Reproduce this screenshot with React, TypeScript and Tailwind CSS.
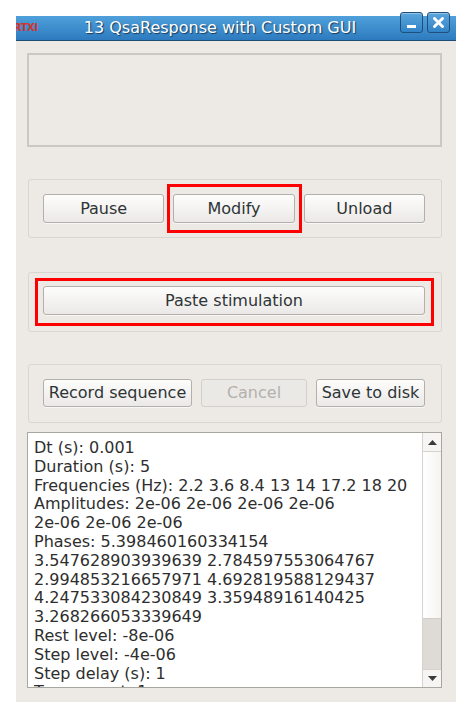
import React from "react";

const lines = [
  "Dt (s): 0.001",
  "Duration (s): 5",
  "Frequencies (Hz): 2.2 3.6 8.4 13 14 17.2 18 20",
  "Amplitudes: 2e-06 2e-06 2e-06 2e-06",
  "2e-06 2e-06 2e-06",
  "Phases: 5.398460160334154",
  "3.547628903939639 2.784597553064767",
  "2.994853216657971 4.692819588129437",
  "4.247533084230849 3.35948916140425",
  "3.268266053339649",
  "Rest level: -8e-06",
  "Step level: -4e-06",
  "Step delay (s): 1",
  "Trace count: 1",
];

function Btn({
  children,
  className = "",
  disabled = false,
}: {
  children: React.ReactNode;
  className?: string;
  disabled?: boolean;
}) {
  return (
    <button
      disabled={disabled}
      className={
        "flex items-center justify-center rounded-[3px] border text-[16px] leading-none " +
        (disabled
          ? "border-[#d3cfcb] bg-[#ebe9e6] text-[#b4b0ac] "
          : "border-[#b3afab] bg-linear-to-b from-[#fdfdfc] to-[#ebe9e7] text-[#2e3436] shadow-[0_1px_0_rgba(255,255,255,0.6)] ") +
        className
      }
    >
      {children}
    </button>
  );
}

function Arrow({ up }: { up: boolean }) {
  return (
    <svg width="9" height="5" viewBox="0 0 9 5">
      {up ? (
        <path d="M0 5 L4.5 0 L9 5 Z" fill="#3a3a3a" />
      ) : (
        <path d="M0 0 L4.5 5 L9 0 Z" fill="#3a3a3a" />
      )}
    </svg>
  );
}

export default function App() {
  return (
    <div className="min-h-[718px] bg-white pl-[16px] pt-[16px] font-['DejaVu_Sans',sans-serif]">
      <div className="flex h-[686px] w-[440px] flex-col bg-[#edeae6]">
        {/* Title bar */}
        <div className="flex h-[25px] items-center border-b border-[#1d4c75] bg-linear-to-b from-[#4fa0da] to-[#2d7bbf]">
          <div className="w-[24px] overflow-hidden">
            <span className="-ml-[2px] block text-[10px] font-bold leading-none tracking-[-0.5px] text-[#d2342c]">
              RTXI
            </span>
          </div>
          <div className="flex-1 text-center text-[16px] leading-none text-white [text-shadow:1px_1px_1px_#173a5c]">
            13 QsaResponse with Custom GUI
          </div>
          <div className="mr-[6px] -mt-[4px] flex gap-[4px] self-start">
            <div className="flex h-[21px] w-[23px] items-end justify-center rounded-[3px] border border-[#1f4f7a] bg-linear-to-b from-[#5aa6dc] to-[#3283c6] pb-[4px] shadow-[inset_0_1px_0_rgba(255,255,255,0.35)]">
              <div className="h-[3px] w-[9px] bg-white" />
            </div>
            <div className="flex h-[21px] w-[23px] items-center justify-center rounded-[3px] border border-[#1f4f7a] bg-linear-to-b from-[#5aa6dc] to-[#3283c6] shadow-[inset_0_1px_0_rgba(255,255,255,0.35)]">
              <svg width="11" height="11" viewBox="0 0 11 11">
                <path d="M1.5 1.5 L9.5 9.5 M9.5 1.5 L1.5 9.5" stroke="white" strokeWidth="2.8" strokeLinecap="square" />
              </svg>
            </div>
          </div>
        </div>

        {/* Content */}
        <div className="flex flex-1 flex-col pb-[14px] pl-[11px] pr-[14px] pt-[12px]">
          <div className="h-[94px] border-2 border-[#cbc7c3]" />

          {/* Group 1 */}
          <div className="ml-[1px] mt-[32px] h-[59px] rounded-[3px] border border-[#d9d5d1] pb-[14px] pl-[14px] pr-[16px] pt-[14px]">
            <div className="grid grid-cols-3 gap-[9px]">
              <Btn className="h-[29px]">Pause</Btn>
              <div className="relative">
                <Btn className="h-[29px] w-full">Modify</Btn>
                <div className="pointer-events-none absolute -bottom-[10px] -left-[6px] -right-[7px] -top-[10px] border-[3px] border-[#ff0000]" />
              </div>
              <Btn className="h-[29px]">Unload</Btn>
            </div>
          </div>

          {/* Group 2 */}
          <div className="relative ml-[1px] mt-[34px] h-[60px] rounded-[3px] border border-[#d9d5d1] pb-[15px] pl-[14px] pr-[16px] pt-[13px]">
            <div className="relative">
              <Btn className="h-[29px] w-full">Paste stimulation</Btn>
              <div className="pointer-events-none absolute -bottom-[11px] -left-[8px] -right-[9px] -top-[8px] border-[3px] border-[#ff0000]" />
            </div>
          </div>

          {/* Group 3 */}
          <div className="ml-[1px] mt-[32px] h-[59px] rounded-[3px] border border-[#d9d5d1] pb-[15px] pl-[14px] pr-[16px] pt-[14px]">
            <div className="flex gap-[9px]">
              <Btn className="h-[28px] w-[149px]">Record sequence</Btn>
              <Btn className="h-[28px] w-[106px]" disabled>
                Cancel
              </Btn>
              <Btn className="h-[28px] w-[109px]">Save to disk</Btn>
            </div>
          </div>

          {/* Text area */}
          <div className="mt-[9px] flex h-[256px] overflow-hidden border border-[#aaa6a2] bg-white">
            <div className="flex-1 overflow-hidden pl-[6px] pt-[6px] text-[16px] leading-[18.8px] text-[#2e2e2e]">
              {lines.map((l, i) => (
                <div key={i} className="whitespace-nowrap">
                  {l}
                </div>
              ))}
            </div>
            <div className="flex w-[19px] flex-col border-l border-[#d6d2ce] bg-[#f4f3f1]">
              <div className="flex h-[19px] items-center justify-center border-b border-[#d6d2ce] bg-[#f6f5f4]">
                <Arrow up />
              </div>
              <div className="h-[167px] border-b border-[#d0ccc8] bg-linear-to-r from-[#ffffff] to-[#f5f4f2]" />
              <div className="flex-1 bg-[#dedad6]" />
              <div className="flex h-[18px] items-center justify-center border-t border-[#d6d2ce] bg-[#f6f5f4]">
                <Arrow up={false} />
              </div>
            </div>
          </div>
        </div>
      </div>
    </div>
  );
}
